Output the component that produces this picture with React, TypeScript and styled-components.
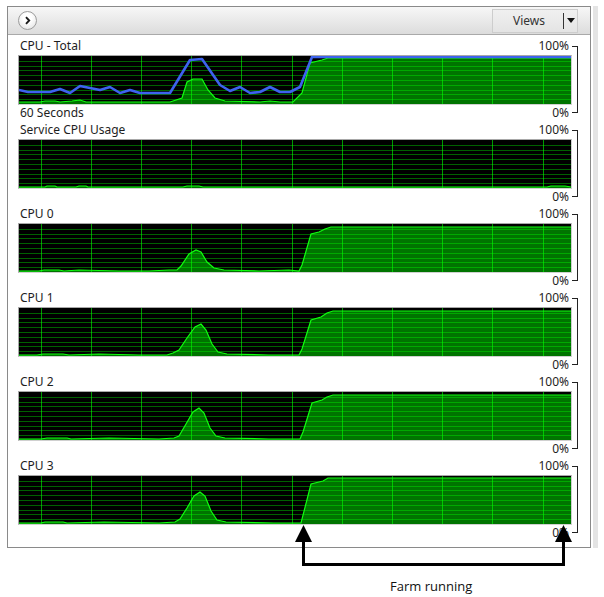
import React from 'react';
import styled, { createGlobalStyle } from 'styled-components';

type Pt = [number, number];

const W = 552;
const H = 48;

const GlobalStyle = createGlobalStyle`
  html, body {
    margin: 0;
    padding: 0;
    background: #fff;
  }
  body {
    font-family: "Noto Sans", "Open Sans", sans-serif;
    color: #1e1e1e;
  }
`

const Page = styled.div`
  position: relative;
  width: 604px;
  height: 597px;
  overflow: hidden;
`

const Top = styled.div`
  display: flex;
  align-items: flex-start;
  padding: 6px 0 0 7px;
`

const Frame = styled.div`
  box-sizing: border-box;
  width: 584px;
  height: 542px;
  border: 1px solid #8a8a8a;
  display: flex;
  flex-direction: column;
  background: #fff;
`

const Strip = styled.div`
  margin-left: 2px;
  width: 5px;
  height: 542px;
  background: #e4e4e4;
`

const Toolbar = styled.div`
  height: 27px;
  border-bottom: 1px solid #a9a9a9;
  background: linear-gradient(#f7f7f7, #dcdcdc);
  display: flex;
  align-items: center;
  justify-content: space-between;
  padding: 0 12px 0 10px;
`

const RoundBtn = styled.div`
  box-sizing: border-box;
  width: 19px;
  height: 19px;
  border-radius: 50%;
  border: 1px solid #9c9c9c;
  background: radial-gradient(circle at 50% 35%, #ffffff 30%, #dedede 100%);
  display: flex;
  align-items: center;
  justify-content: center;
`

const ViewsBtn = styled.div`
  box-sizing: border-box;
  width: 86px;
  height: 24px;
  border: 1px solid #cdcdcd;
  background: linear-gradient(#f0f0f0, #e4e4e4);
  display: flex;
  align-items: center;
  font-size: 12px;
  color: #333;
`

const ViewsLabel = styled.span`
  flex: 1;
  text-align: center;
  padding-left: 2px;
`

const Divider = styled.span`
  width: 1px;
  height: 16px;
  background: #333;
`

const DropArrow = styled.span`
  width: 13px;
  display: flex;
  justify-content: center;
`

const Content = styled.div`
  display: flex;
  flex-direction: column;
  gap: 3px;
  padding: 4px 0 0 10px;
`

const Section = styled.div`
  display: flex;
`

const Column = styled.div`
  width: 554px;
  display: flex;
  flex-direction: column;
`

const Row = styled.div`
  display: flex;
  justify-content: space-between;
  height: 14px;
  line-height: 14px;
  font-size: 12px;
  padding: 0 3px 0 2px;
`

const ChartBox = styled.div`
  width: ${W}px;
  height: ${H}px;
  border: 1px solid #a8a8a8;
  border-right-color: #d0d0d0;
  border-bottom-color: #d0d0d0;
  margin: 2px 0 1px;
  background: #000;
`

const Bracket = styled.div`
  width: 5px;
  margin: 7px 0;
  border: 1px solid #222;
  border-left: none;
`

const Caption = styled.div`
  margin: 30px 0 0 390px;
  height: 16px;
  line-height: 16px;
  font-family: "Open Sans", "Noto Sans", sans-serif;
  font-size: 13px;
  color: #111;
`

const Overlay = styled.svg`
  position: absolute;
  left: 0;
  top: 0;
  pointer-events: none;
`

const total: Pt[] = [[0,46],[21,46],[26,45],[36,45],[41,46],[53,45],[61,44],[67,46],[151,46],[163,42],[168,26],[174,23],[183,23],[189,34],[196,42],[206,45],[241,46],[251,45],[261,46],[274,46],[283,37],[291,7],[303,4],[309,2],[552,2]];
const totalBlue: Pt[] = [[0,34],[9,36],[31,36],[41,33],[51,37],[61,30],[71,32],[81,34],[91,31],[101,37],[111,34],[121,37],[151,37],[171,4],[183,3],[201,29],[211,35],[221,31],[231,37],[241,36],[251,31],[261,36],[271,36],[281,31],[293,1],[552,1]];
const service: Pt[] = [[0,47],[26,47],[28,46],[36,46],[38,47],[57,47],[60,46],[67,46],[69,47],[164,47],[168,46],[180,46],[184,47],[528,47],[532,46],[546,46],[552,47]];
const cpu0: Pt[] = [[0,47],[20,47],[25,46],[40,46],[45,47],[60,46],[100,47],[130,47],[150,46],[158,46],[162,42],[170,30],[177,26],[182,28],[188,38],[195,44],[205,46],[240,47],[270,46],[280,47],[283,41],[292,10],[300,8],[306,5],[312,3],[552,3]];
const cpu1: Pt[] = [[0,47],[18,47],[24,46],[44,46],[50,47],[80,46],[120,47],[148,47],[154,45],[160,42],[168,30],[176,19],[182,16],[187,22],[193,36],[199,44],[208,46],[250,47],[280,47],[283,41],[292,12],[302,9],[308,5],[314,3],[552,3]];
const cpu2: Pt[] = [[0,47],[22,47],[28,46],[48,46],[52,47],[90,46],[140,47],[155,46],[160,44],[167,32],[174,20],[180,16],[185,21],[191,36],[197,44],[206,46],[250,47],[281,47],[284,40],[293,11],[303,8],[308,5],[314,3],[552,3]];
const cpu3: Pt[] = [[0,47],[22,47],[26,46],[44,46],[48,47],[85,46],[140,47],[156,46],[161,43],[168,32],[175,20],[181,16],[186,20],[192,35],[198,44],[207,46],[255,47],[282,47],[292,8],[304,5],[309,2],[552,2]];

const toPoints = (d: Pt[]) => d.map(([x, y]) => `${x},${y}`).join(' ');

const hLines = Array.from({ length: 9 }, (_, i) => (i + 1) * 4.8);
const vLines = Array.from({ length: 11 }, (_, i) => 21.5 + i * 50.2);

const Graph: React.FC<{ data: Pt[]; line?: Pt[] }> = ({ data, line }) => (
  <ChartBox>
    <svg width={W} height={H} viewBox={`0 0 ${W} ${H}`} style={{ display: 'block' }}>
      <polygon points={`${toPoints(data)} ${W},${H} 0,${H}`} fill="#007400" />
      {hLines.map((y) => (
        <line key={'h' + y} x1={0} x2={W} y1={Math.round(y) + 0.5} y2={Math.round(y) + 0.5} stroke="rgba(0,255,0,0.38)" strokeWidth={1} />
      ))}
      {vLines.map((x) => (
        <line key={'v' + x} y1={0} y2={H} x1={Math.round(x) + 0.5} x2={Math.round(x) + 0.5} stroke="rgba(0,255,0,0.6)" strokeWidth={1} />
      ))}
      <polyline points={toPoints(data)} fill="none" stroke="#10ff10" strokeWidth={1.2} />
      {line && <polyline points={toPoints(line)} fill="none" stroke="#3d63ee" strokeWidth={2.6} strokeLinejoin="round" />}
    </svg>
  </ChartBox>
);

interface PanelProps {
  title: string;
  data: Pt[];
  line?: Pt[];
  footer?: string;
}

const Panel: React.FC<PanelProps> = ({ title, data, line, footer }) => (
  <Section>
    <Column>
      <Row>
        <span>{title}</span>
        <span>100%</span>
      </Row>
      <Graph data={data} line={line} />
      <Row>
        <span>{footer || ''}</span>
        <span>0%</span>
      </Row>
    </Column>
    <Bracket />
  </Section>
);

export default function App() {
  return (
    <Page>
      <GlobalStyle />
      <Top>
        <Frame>
          <Toolbar>
            <RoundBtn>
              <svg width="9" height="9" viewBox="0 0 9 9">
                <path d="M3 1.2 L6.2 4.5 L3 7.8" fill="none" stroke="#1a1a1a" strokeWidth="1.9" />
              </svg>
            </RoundBtn>
            <ViewsBtn>
              <ViewsLabel>Views</ViewsLabel>
              <Divider />
              <DropArrow>
                <svg width="8" height="5" viewBox="0 0 8 5">
                  <path d="M0 0 H8 L4 5 Z" fill="#111" />
                </svg>
              </DropArrow>
            </ViewsBtn>
          </Toolbar>
          <Content>
            <Panel title="CPU - Total" data={total} line={totalBlue} footer="60 Seconds" />
            <Panel title="Service CPU Usage" data={service} />
            <Panel title="CPU 0" data={cpu0} />
            <Panel title="CPU 1" data={cpu1} />
            <Panel title="CPU 2" data={cpu2} />
            <Panel title="CPU 3" data={cpu3} />
          </Content>
        </Frame>
        <Strip />
      </Top>
      <Caption>Farm running</Caption>
      <Overlay width={604} height={597} viewBox="0 0 604 597">
        <polyline points="303.5,541 303.5,564.5 563.5,564.5 563.5,541" fill="none" stroke="#000" strokeWidth={3} />
        <polygon points="303.5,525 295,542 312,542" fill="#000" />
        <polygon points="563.5,525 555,542 572,542" fill="#000" />
      </Overlay>
    </Page>
  );
}
